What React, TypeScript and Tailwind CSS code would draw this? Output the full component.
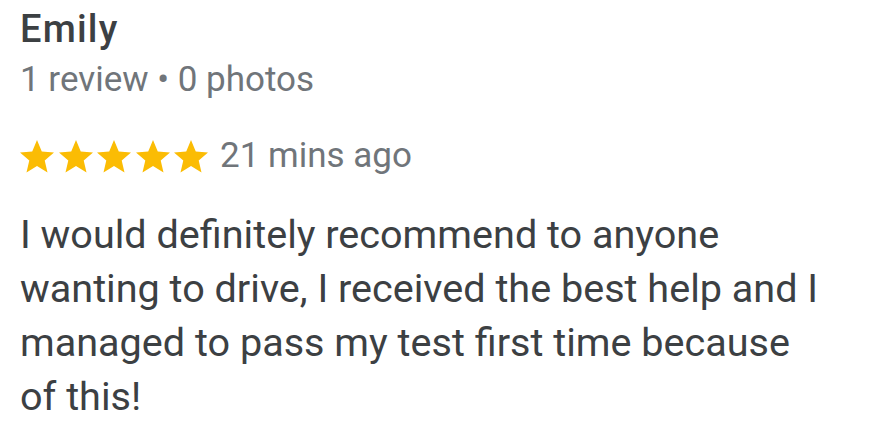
import React from 'react';

const Star: React.FC = () => (
  <svg viewBox="2 2 20 19.27" className="h-[33px] w-[34px]" fill="#fbbc04">
    <path d="M12 17.27 18.18 21l-1.64-7.03L22 9.24l-7.19-.61L12 2 9.19 8.63 2 9.24l5.46 4.73L5.82 21z" />
  </svg>
);

const App: React.FC = () => {
  return (
    <div className="h-[440px] w-[873px] overflow-hidden bg-white pl-[20px] pt-[5px] font-['Roboto',sans-serif]">
      <div className="text-[38px] leading-[49px] font-medium tracking-[1.2px] text-[#3c4043]">Emily</div>
      <div className="mt-[2px] text-[35px] leading-[48px] text-[#70757a]">1 review • 0 photos</div>

      <div className="mt-[32px] flex h-[40px] items-center">
        <div className="flex gap-[4.5px]">
          <Star />
          <Star />
          <Star />
          <Star />
          <Star />
        </div>
        <span className="ml-[12px] text-[35px] leading-[40px] text-[#70757a]">21 mins ago</span>
      </div>

      <p className="mt-[32px] w-[806px] text-[39.6px] leading-[54px] text-[#3c4043]">
        I would definitely recommend to anyone wanting to drive, I received the best help and I managed to pass my test first time because of this!
      </p>
    </div>
  );
};

export default App;
